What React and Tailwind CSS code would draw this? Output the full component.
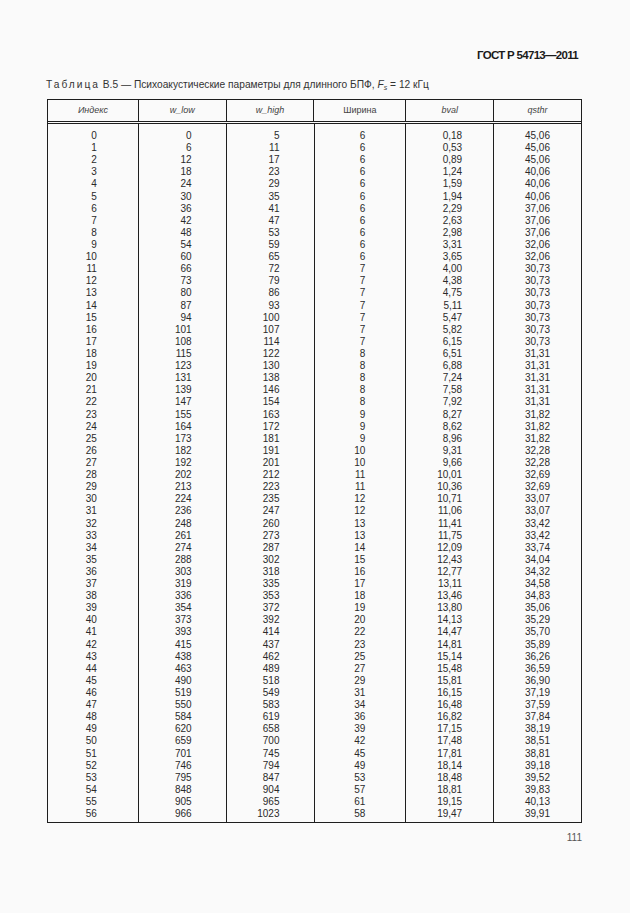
import React from "react";

const rows = [
  ["0", "0", "5", "6", "0,18", "45,06"],
  ["1", "6", "11", "6", "0,53", "45,06"],
  ["2", "12", "17", "6", "0,89", "45,06"],
  ["3", "18", "23", "6", "1,24", "40,06"],
  ["4", "24", "29", "6", "1,59", "40,06"],
  ["5", "30", "35", "6", "1,94", "40,06"],
  ["6", "36", "41", "6", "2,29", "37,06"],
  ["7", "42", "47", "6", "2,63", "37,06"],
  ["8", "48", "53", "6", "2,98", "37,06"],
  ["9", "54", "59", "6", "3,31", "32,06"],
  ["10", "60", "65", "6", "3,65", "32,06"],
  ["11", "66", "72", "7", "4,00", "30,73"],
  ["12", "73", "79", "7", "4,38", "30,73"],
  ["13", "80", "86", "7", "4,75", "30,73"],
  ["14", "87", "93", "7", "5,11", "30,73"],
  ["15", "94", "100", "7", "5,47", "30,73"],
  ["16", "101", "107", "7", "5,82", "30,73"],
  ["17", "108", "114", "7", "6,15", "30,73"],
  ["18", "115", "122", "8", "6,51", "31,31"],
  ["19", "123", "130", "8", "6,88", "31,31"],
  ["20", "131", "138", "8", "7,24", "31,31"],
  ["21", "139", "146", "8", "7,58", "31,31"],
  ["22", "147", "154", "8", "7,92", "31,31"],
  ["23", "155", "163", "9", "8,27", "31,82"],
  ["24", "164", "172", "9", "8,62", "31,82"],
  ["25", "173", "181", "9", "8,96", "31,82"],
  ["26", "182", "191", "10", "9,31", "32,28"],
  ["27", "192", "201", "10", "9,66", "32,28"],
  ["28", "202", "212", "11", "10,01", "32,69"],
  ["29", "213", "223", "11", "10,36", "32,69"],
  ["30", "224", "235", "12", "10,71", "33,07"],
  ["31", "236", "247", "12", "11,06", "33,07"],
  ["32", "248", "260", "13", "11,41", "33,42"],
  ["33", "261", "273", "13", "11,75", "33,42"],
  ["34", "274", "287", "14", "12,09", "33,74"],
  ["35", "288", "302", "15", "12,43", "34,04"],
  ["36", "303", "318", "16", "12,77", "34,32"],
  ["37", "319", "335", "17", "13,11", "34,58"],
  ["38", "336", "353", "18", "13,46", "34,83"],
  ["39", "354", "372", "19", "13,80", "35,06"],
  ["40", "373", "392", "20", "14,13", "35,29"],
  ["41", "393", "414", "22", "14,47", "35,70"],
  ["42", "415", "437", "23", "14,81", "35,89"],
  ["43", "438", "462", "25", "15,14", "36,26"],
  ["44", "463", "489", "27", "15,48", "36,59"],
  ["45", "490", "518", "29", "15,81", "36,90"],
  ["46", "519", "549", "31", "16,15", "37,19"],
  ["47", "550", "583", "34", "16,48", "37,59"],
  ["48", "584", "619", "36", "16,82", "37,84"],
  ["49", "620", "658", "39", "17,15", "38,19"],
  ["50", "659", "700", "42", "17,48", "38,51"],
  ["51", "701", "745", "45", "17,81", "38,81"],
  ["52", "746", "794", "49", "18,14", "39,18"],
  ["53", "795", "847", "53", "18,48", "39,52"],
  ["54", "848", "904", "57", "18,81", "39,83"],
  ["55", "905", "965", "61", "19,15", "40,13"],
  ["56", "966", "1023", "58", "19,47", "39,91"],
];

// width of each column and right padding of its numbers
const cols = [
  { head: "Индекс", w: "w-[91px]", pr: "pr-[41px]", italic: true },
  { head: "w_low", w: "w-[88px]", pr: "pr-[34px]", italic: true },
  { head: "w_high", w: "w-[88px]", pr: "pr-[34px]", italic: true },
  { head: "Ширина", w: "w-[92px]", pr: "pr-[40px]", italic: false },
  { head: "bval", w: "w-[88px]", pr: "pr-[31px]", italic: true },
  { head: "qsthr", w: "w-[87px]", pr: "pr-[31px]", italic: true },
];

const App = () => {
  return (
    <div className="w-[630px] h-[913px] bg-[#fafafa] text-[#2a2a2a] font-['Liberation_Sans',Arial,sans-serif]">
      <div className="pt-[48px] pl-[47px] w-[582px]">
        {/* Document header */}
        <div className="pr-[4px] text-right text-[11.5px] leading-[14px] font-bold tracking-[-0.7px] text-[#1a1a1a]">
          ГОСТ Р 54713—2011
        </div>

        {/* Table caption */}
        <p className="mt-[16px] -ml-[1px] text-[10.2px] leading-[13px] text-[#333]">
          <span className="tracking-[2px]">Таблица</span> В.5 — Психоакустические параметры для длинного БПФ,{" "}
          <i>F</i>
          <sub className="text-[7px] italic">s</sub> = 12 кГц
        </p>

        {/* Table */}
        <div className="mt-[8px] w-[535px] border border-[#1e1e1e]">
          <div className="flex border-b-[3px] border-double border-[#1e1e1e]">
            {cols.map((c, i) => (
              <div
                key={c.head}
                className={`${c.w} h-[21px] flex items-center justify-center text-[9px] text-[#444] ${
                  c.italic ? "italic" : ""
                } ${i < cols.length - 1 ? "border-r border-[#1e1e1e]" : ""}`}
              >
                {c.head}
              </div>
            ))}
          </div>
          <div className="flex">
            {cols.map((c, i) => (
              <div
                key={c.head}
                className={`${c.w} ${c.pr} pt-[6px] pb-[2px] text-right text-[10px] leading-[12.11px] ${
                  i < cols.length - 1 ? "border-r border-[#1e1e1e]" : ""
                }`}
              >
                {rows.map((r) => (
                  <div key={r[0]}>{r[i]}</div>
                ))}
              </div>
            ))}
          </div>
        </div>

        {/* Page number */}
        <div className="mt-[9px] text-right text-[10px] leading-[12px] text-[#555]">111</div>
      </div>
    </div>
  );
};

export default App;
